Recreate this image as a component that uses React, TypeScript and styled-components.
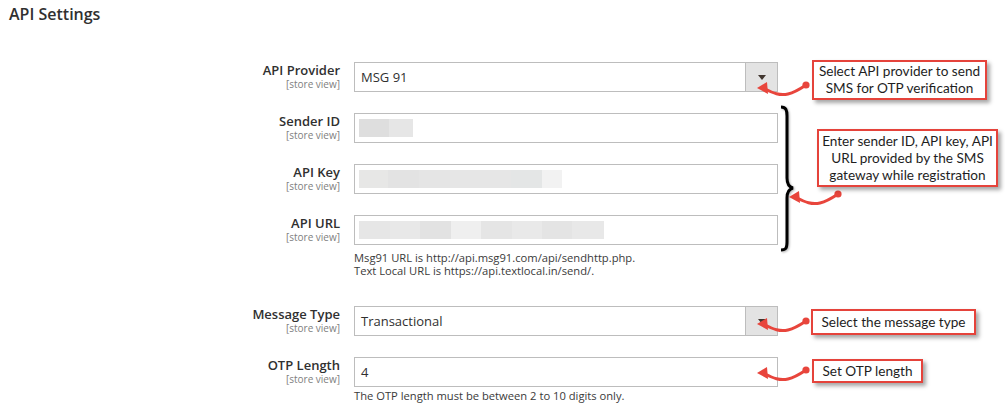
import styled, { createGlobalStyle } from 'styled-components'

interface FieldType {
	name: string
	value?: string
	blur?: string[]
	blurWidths?: number[]
	select?: boolean
	note?: string[]
	noteGap?: number
	noteAfter?: number
}

const fields: FieldType[] = [
	{ name: 'API Provider', value: 'MSG 91', select: true },
	{ name: 'Sender ID', blur: ['#dedede', '#e6e6e6'], blurWidths: [30, 24] },
	{
		name: 'API Key',
		blur: ['#e7e7e6', '#e3e3e3', '#e5e5e5', '#e6e6e6', '#e6e6e6', '#e4e6e6', '#f2f2f2'],
		blurWidths: [29, 31, 31, 30, 31, 31, 20],
	},
	{
		name: 'API URL',
		blur: ['#e6e6e6', '#e8e8e8', '#e2e2e2', '#efefef', '#e5e5e5', '#e9e9e9', '#e4e4e4', '#e8e8e8'],
		blurWidths: [31, 30, 31, 30, 31, 30, 30, 32],
		note: ['Msg91 URL is http://api.msg91.com/api/sendhttp.php.', 'Text Local URL is https://api.textlocal.in/send/.'],
		noteGap: 6,
		noteAfter: 8,
	},
	{ name: 'Message Type', value: 'Transactional', select: true },
	{ name: 'OTP Length', value: '4', note: ['The OTP length must be between 2 to 10 digits only.'], noteGap: 2 },
]

const callouts = [
	{ x: 812, y: 60, w: 175, h: 40, lines: ['Select API provider to send', 'SMS for OTP verification'] },
	{ x: 817, y: 129, w: 181, h: 58, lines: ['Enter sender ID, API key, API', 'URL provided by the SMS', 'gateway while registration'] },
	{ x: 811, y: 309, w: 165, h: 26, lines: ['Select the message type'] },
	{ x: 812, y: 359, w: 111, h: 24, lines: ['Set OTP length'] },
]

// arrow tip sits 6px right / 10px down from the svg origin
const arrows = [
	{ x: 752, y: 78 },
	{ x: 784, y: 187 },
	{ x: 752, y: 314 },
	{ x: 752, y: 363 },
]

const CurvedArrow = ({ x, y }: { x: number; y: number }) => (
	<ArrowSvg $x={x} $y={y} width='60' height='24' viewBox='0 0 60 24'>
		<path d='M13 11 C21 15 28 18 36 16 C44 14 48 11 54 7' stroke='#e8453c' strokeWidth='3' fill='none' strokeLinecap='round' />
		<polygon points='5,10 15,4 16,16' fill='#e8453c' />
		<circle cx='54' cy='7' r='3.6' fill='#e8453c' />
	</ArrowSvg>
)

const App = () => {
	return (
		<Page>
			<GlobalStyle />
			<Title>API Settings</Title>
			<Form>
				{fields.map(field => (
					<Row key={field.name}>
						<Label>
							<LabelName>{field.name}</LabelName>
							<Scope>[store view]</Scope>
						</Label>
						<Control>
							<Box>
								{field.value ? <BoxText>{field.value}</BoxText> : null}
								{field.blur ? (
									<Blur>
										{field.blur.map((color, i) => (
											<BlurPiece key={i} $color={color} $width={field.blurWidths ? field.blurWidths[i] : 30} />
										))}
									</Blur>
								) : null}
								{field.select ? (
									<ArrowButton>
										<Caret />
									</ArrowButton>
								) : null}
							</Box>
							{field.note ? (
								<Note $gap={field.noteGap ?? 4} $after={field.noteAfter ?? 0}>
									{field.note.map(line => (
										<div key={line}>{line}</div>
									))}
								</Note>
							) : null}
						</Control>
					</Row>
				))}
			</Form>

			<Brace width='24' height='150' viewBox='0 0 24 150'>
				<path
					d='M6 3 C11 3 12 6 12 12 L12 74 C12 80 14 83 18 84 C14 85 12 88 12 94 L12 138 C12 144 11 146 6 146'
					stroke='#000'
					strokeWidth='3'
					fill='none'
				/>
			</Brace>

			{arrows.map((a, i) => (
				<CurvedArrow key={i} x={a.x} y={a.y} />
			))}

			{callouts.map(c => (
				<Callout key={c.lines[0]} $x={c.x} $y={c.y} $w={c.w} $h={c.h}>
					{c.lines.map(line => (
						<div key={line}>{line}</div>
					))}
				</Callout>
			))}
		</Page>
	)
}

export default App

const GlobalStyle = createGlobalStyle`
	html, body {
		margin: 0;
		padding: 0;
		background: #ffffff;
	}
	body {
		font-family: 'Open Sans', 'Noto Sans', sans-serif;
		color: #303030;
	}
`

const Page = styled.div`
	position: relative;
	width: 1005px;
	height: 413px;
	overflow: hidden;
	background: #ffffff;
`

const Title = styled.h2`
	margin: 0;
	padding: 4px 9px 0;
	font-size: 16px;
	line-height: 20px;
	font-weight: 600;
	color: #303030;
`

const Form = styled.div`
	display: flex;
	flex-direction: column;
	gap: 21px;
	margin-top: 38px;
`

const Row = styled.div`
	display: grid;
	grid-template-columns: 340px 424px;
	column-gap: 14px;
`

const Label = styled.div`
	display: flex;
	flex-direction: column;
	align-items: flex-end;
	padding-top: 1px;
`

const LabelName = styled.span`
	font-size: 13px;
	line-height: 15px;
	font-weight: 600;
	color: #303030;
`

const Scope = styled.span`
	font-size: 10px;
	line-height: 13px;
	color: #808080;
`

const Control = styled.div`
	display: flex;
	flex-direction: column;
`

const Box = styled.div`
	position: relative;
	display: flex;
	align-items: center;
	height: 30px;
	box-sizing: border-box;
	border: 1px solid #bdbdbd;
	background: #ffffff;
	padding: 0 6px;
`

const BoxText = styled.span`
	font-size: 13px;
	line-height: 28px;
	color: #303030;
`

const Blur = styled.div`
	display: flex;
	height: 100%;
	padding: 5px 0;
	box-sizing: border-box;
	margin-left: -2px;
`

const BlurPiece = styled.div<{ $color: string; $width: number }>`
	width: ${({ $width }) => $width}px;
	height: 100%;
	background: ${({ $color }) => $color};
`

const ArrowButton = styled.div`
	position: absolute;
	top: 0;
	right: 0;
	bottom: 0;
	width: 31px;
	display: flex;
	align-items: center;
	justify-content: center;
	background: #e3e3e3;
	border-left: 1px solid #bdbdbd;
`

const Caret = styled.div`
	width: 0;
	height: 0;
	border-left: 4px solid transparent;
	border-right: 4px solid transparent;
	border-top: 5px solid #41362f;
	margin-top: 1px;
`

const Note = styled.div<{ $gap: number; $after: number }>`
	margin-top: ${({ $gap }) => $gap}px;
	margin-bottom: ${({ $after }) => $after}px;
	font-size: 11.2px;
	line-height: 13px;
	color: #3a3a3a;
`

const Brace = styled.svg`
	position: absolute;
	left: 775px;
	top: 104px;
	filter: drop-shadow(1px 1px 1px rgba(0, 0, 0, 0.3));
`

const ArrowSvg = styled.svg<{ $x: number; $y: number }>`
	position: absolute;
	left: ${({ $x }) => $x}px;
	top: ${({ $y }) => $y}px;
	overflow: visible;
`

const Callout = styled.div<{ $x: number; $y: number; $w: number; $h: number }>`
	position: absolute;
	left: ${({ $x }) => $x}px;
	top: ${({ $y }) => $y}px;
	width: ${({ $w }) => $w}px;
	height: ${({ $h }) => $h}px;
	box-sizing: border-box;
	border: 2px solid #e5433b;
	background: #ffffff;
	box-shadow: 3px 3px 4px rgba(0, 0, 0, 0.35);
	display: flex;
	flex-direction: column;
	justify-content: center;
	align-items: center;
	font-family: Lato, 'Open Sans', sans-serif;
	font-size: 13.6px;
	line-height: 17px;
	color: #1e1e1e;
	white-space: nowrap;
`
